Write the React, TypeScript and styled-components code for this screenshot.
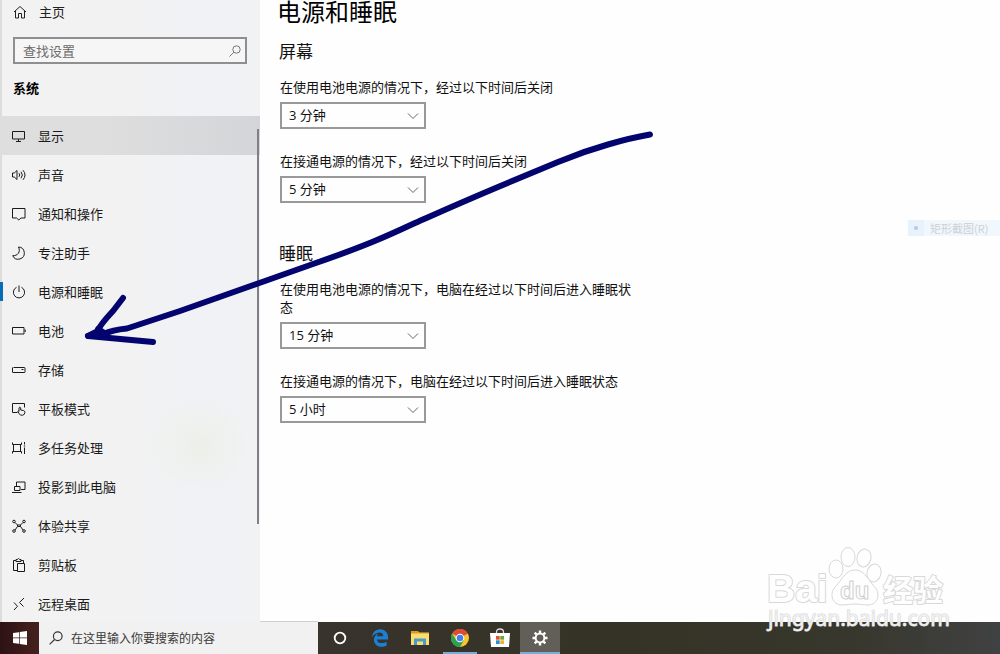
import React, { useId } from "react";
import styled, { createGlobalStyle, css } from "styled-components";
import { FaEdgeLegacy } from "react-icons/fa";

const GlobalStyle = createGlobalStyle`
  *, *::before, *::after { box-sizing: border-box; }
  body {
    margin: 0;
    background: #fefefe;
    color: #111;
    font: 13px/18px "Noto Sans CJK SC", "Microsoft YaHei", sans-serif;
  }
  h1, h2, p, ul { margin: 0; padding: 0; }
  button, input, select { font: inherit; color: inherit; }
`;

const Screen = styled.div`
  position: relative;
  display: flex;
  flex-direction: column;
  height: 100vh;
  overflow: hidden;
`;

const Window = styled.div`
  display: flex;
  flex: 1;
  min-height: 0;
`;

const Sidebar = styled.aside`
  position: relative;
  flex: none;
  width: 260px;
  overflow: hidden;
  background:
    linear-gradient(90deg, #dcdcdc 2px, transparent 2px),
    radial-gradient(circle at 200px 445px, #ecf0e8 0, rgba(236, 240, 232, 0) 50px),
    linear-gradient(90deg, rgba(242, 242, 242, 0) 50%, #f0f2f5 75%, #f1f2f4 100%),
    #f2f2f2;
`;

const HomeLink = styled.a`
  display: flex;
  align-items: center;
  gap: 12px;
  height: 23px;
  padding-left: 13px;
  color: #222;
  text-decoration: none;
`;

const SearchBox = styled.label`
  display: flex;
  align-items: center;
  height: 27px;
  margin: 14px 13px 0;
  padding: 0 4px 0 8px;
  border: 2px solid #8f8f8f;
  background: #f6f6f6;
  color: #777;
`;

const SearchInput = styled.input`
  flex: 1;
  min-width: 0;
  padding: 0;
  border: 0;
  outline: 0;
  background: none;
  &::placeholder { color: #6c6c6c; opacity: 1; }
`;

const Category = styled.h2`
  margin: 14px 13px 18px;
  color: #000;
  font-size: 13px;
  line-height: 20px;
`;

const NavList = styled.ul`
  list-style: none;
`;

const NavLink = styled.a<{ $hovered?: boolean; $current?: boolean }>`
  position: relative;
  display: flex;
  align-items: center;
  gap: 12px;
  height: 39px;
  padding-left: 12px;
  color: #1a1a1a;
  text-decoration: none;
  ${(p) => p.$hovered && css`background: linear-gradient(90deg, #dedede 40%, #d3d5d8);`}
  ${(p) =>
    p.$current &&
    css`
      &::before {
        content: "";
        position: absolute;
        left: 0;
        top: 10px;
        width: 3px;
        height: 19px;
        background: #0a6cb5;
      }
    `}
`;

const ScrollThumb = styled.div`
  position: absolute;
  top: 129px;
  right: 1px;
  width: 2px;
  height: 395px;
  background: #808184;
`;

const Glyph = styled.svg`
  flex: none;
  width: 14px;
  height: 14px;
  fill: none;
  stroke: currentColor;
  stroke-width: 1;
  overflow: visible;
`;

const Content = styled.main`
  flex: 1;
  min-width: 0;
  padding: 0 20px;
`;

const Title = styled.h1`
  margin-left: -3px;
  color: #000;
  font-size: 24px;
  font-weight: 400;
  line-height: 22px;
`;

const Section = styled.section`
  display: flex;
  flex-direction: column;
  gap: 23px;
  max-width: 355px;
  margin-top: 17px;
  & + & { margin-top: 38px; }
`;

const SectionTitle = styled.h2`
  margin: 0 0 -8px -1px;
  font-size: 17px;
  font-weight: 400;
  line-height: 24px;
`;

const Field = styled.div`
  display: flex;
  flex-direction: column;
  gap: 6px;
`;

const SelectWrap = styled.div`
  display: grid;
  align-items: center;
  width: 146px;
  & > * { grid-area: 1 / 1; }
`;

const Select = styled.select`
  width: 100%;
  height: 27px;
  padding: 0 24px 1px 7px;
  border: 2px solid #999;
  border-radius: 0;
  background: #fefefe;
  font-family: "Open Sans", "Noto Sans CJK SC", sans-serif;
  appearance: none;
`;

const Chevron = styled.svg`
  justify-self: end;
  width: 10px;
  height: 6px;
  margin-right: 8px;
  fill: none;
  stroke: #666;
  overflow: visible;
  pointer-events: none;
`;

const Taskbar = styled.footer`
  display: flex;
  flex: none;
  height: 32px;
  background: linear-gradient(90deg, #38332d 30%, #353325 62%, #38372d 85%, #404142);
`;

const StartButton = styled.button`
  display: grid;
  place-items: center;
  width: 39px;
  padding: 0;
  border: 0;
  background: linear-gradient(90deg, #2e1214, #44211e);
`;

const TaskSearch = styled.label`
  display: flex;
  align-items: center;
  gap: 8px;
  width: 279px;
  margin-top: -1px;
  padding: 0 10px;
  border-top: 1px solid #cfcfcf;
  background: #f1f1f1;
  color: #333;
  font-size: 12px;
`;

const TaskInput = styled(SearchInput)`
  &::placeholder { color: #3a3a3a; }
`;

const TaskApps = styled.div`
  display: flex;
  padding-left: 2px;
`;

const TaskButton = styled.button<{ $running?: boolean; $active?: boolean }>`
  position: relative;
  display: grid;
  place-items: center;
  width: 40px;
  padding: 0;
  border: 0;
  background: ${(p) => (p.$active ? "#625f59" : "transparent")};
  &::after {
    content: "";
    position: absolute;
    bottom: 0;
    left: ${(p) => (p.$active ? 0 : 3)}px;
    right: ${(p) => (p.$active ? 0 : 3)}px;
    height: 2px;
    background: ${(p) => (p.$running || p.$active ? "#77aed8" : "transparent")};
  }
`;

const SnipHint = styled.div`
  position: absolute;
  top: 220px;
  right: 0;
  display: flex;
  align-items: center;
  gap: 6px;
  width: 92px;
  height: 16px;
  background: #f0f7fd;
  color: #cdd1d6;
  font-size: 11px;
  line-height: 16px;
`;

const SnipMark = styled.span`
  display: grid;
  place-items: center;
  width: 16px;
  height: 16px;
  background: #e6f2fc;
  &::before {
    content: "";
    width: 4px;
    height: 4px;
    border-radius: 50%;
    background: #b9cbdc;
  }
`;

const Ink = styled.svg`
  position: absolute;
  top: 0;
  left: 0;
  width: 660px;
  height: 350px;
  fill: none;
  stroke: #04046f;
  stroke-width: 6;
  stroke-linecap: round;
  stroke-linejoin: round;
  pointer-events: none;
`;

const Watermark = styled.svg`
  position: absolute;
  right: 50px;
  bottom: 18px;
  width: 186px;
  height: 92px;
  overflow: visible;
  pointer-events: none;
`;

const icons: Record<string, React.ReactNode> = {
  home: <path d="M1 7 7 1.5 13 7M2.5 6v7H5.5V8.5h3V13h3V6" />,
  display: <path d="M.5 2.5h12v7.500H.5zM6.500 10v2M4 12.500h5" />,
  sound: <path d="M.5 5v4h1.800L5 11.500v-9L2.300 5zM7 5.200q1.500 1.800 0 3.600M9 3.700q2.700 3.300 0 6.600M11 2.200q4 4.800 0 9.600" />,
  message: <path d="M.5 1.500h12.500v9.500H9L6.800 13 4.600 11H.5z" />,
  moon: <path d="M6.500 1A6.100 6.100 0 1 1 .7 9.700C5.500 10 9 6 6.500 1z" />,
  power: <path d="M4.500 2.300a5.600 5.600 0 1 0 5 0M7 .5v6.500" />,
  battery: <path d="M.5 3.500H12v6.500H.5zM13.200 5.500v2.500" />,
  storage: <path d="M1.500 4.500h11q.5 0 .5.500v4q0 .5-.5.500H1q-.5 0-.5-.5V5q0-.5.500-.5M9.500 6.500h2" />,
  tablet: <path d="M5.500 10.500H.5v-9h12v4M7 9.500V5.800q.8-1.500 1.700 0V8l3 .6q1.300.4 1.200 1.700-.1 2.700-2.600 3-2.200 0-3.200-1.500L5.800 9.300q.5-.9 1.200.2" />,
  tasks: <path d="M1.500 3.500h7v7h-7zM.5 1.500v2h2M9.500 1.500v2h-2M.5 12.500v-2h2M9.500 12.500v-2h-2M12.500 1v2.500M12.500 6.500V13M11.800 5h1.400" />,
  project: <path d="M4.500 6.500V2H13v7.500H9M2.500 6.500H8v4H2.500zM0 12.500h9.500" />,
  share: (
    <>
      <path d="M3 3.500 5.500 6h3L11 3.500M3 11 5.500 7.500h3L11 11M5.500 6v1.500M8.500 6v1.500" />
      <circle cx="2" cy="2.500" r="1.300" />
      <circle cx="12" cy="2.500" r="1.300" />
      <circle cx="2" cy="12" r="1.300" />
      <circle cx="12" cy="12" r="1.300" />
    </>
  ),
  clipboard: <path d="M5 12.500H1.500v-10H4M9 2.500h2.500V5M4 1.500h1.200q1.300-2 2.600 0H9v2H4zM5.500 5.500h7v8h-7z" />,
  remote: <path d="M2 5.500 5.500 9.300 2 13M12 1 7.500 5.500 11.500 9.500" />,
};

const Icon = ({ name }: { name: string }) => (
  <Glyph viewBox="0 0 14 14" aria-hidden="true">{icons[name]}</Glyph>
);

const Magnifier = ({ size }: { size: number }) => (
  <svg width={size} height={size} viewBox="0 0 12 12" fill="none" stroke="currentColor" aria-hidden="true">
    <circle cx="7.500" cy="4.500" r="3.700" />
    <path d="M4.800 7.300.5 11.500" />
  </svg>
);

const navItems = [
  ["display", "显示"],
  ["sound", "声音"],
  ["message", "通知和操作"],
  ["moon", "专注助手"],
  ["power", "电源和睡眠"],
  ["battery", "电池"],
  ["storage", "存储"],
  ["tablet", "平板模式"],
  ["tasks", "多任务处理"],
  ["project", "投影到此电脑"],
  ["share", "体验共享"],
  ["clipboard", "剪贴板"],
  ["remote", "远程桌面"],
];

function TimeoutField({ label, value }: { label: string; value: string }) {
  const id = useId();
  return (
    <Field>
      <label htmlFor={id}>{label}</label>
      <SelectWrap>
        <Select id={id} defaultValue={value}>
          <option>{value}</option>
        </Select>
        <Chevron viewBox="0 0 10 6" aria-hidden="true">
          <path d="M0 .5 5 5.500 10 .5" />
        </Chevron>
      </SelectWrap>
    </Field>
  );
}

const WindowsLogo = () => (
  <svg width="14" height="14" viewBox="0 0 14 14" fill="#fff">
    <path d="M0 2 6 1.200V6.600H0zM6.700 1.100 14 0v6.600H6.700zM0 7.300h6v5.500L0 12zM6.700 7.300H14V14l-7.300-1.100z" />
  </svg>
);

const FolderIcon = () => (
  <svg width="18" height="16" viewBox="0 0 18 16">
    <path d="M0 1h7l1 1.500h10V15H0z" fill="#f3bd3c" />
    <path d="M0 4h18v11H0z" fill="#fbdc72" />
    <path d="M0 1h7v2H0z" fill="#d99a20" />
    <path d="M3 15V8.500h12V15h-3v-3.500H6V15z" fill="#4a9cc7" />
  </svg>
);

const ChromeIcon = () => (
  <svg width="18" height="18" viewBox="0 0 18 18">
    <circle cx="9" cy="9" r="9" fill="#f9c62e" />
    <path d="M9 9 1.200 4.500A9 9 0 0 1 16.800 4.500z" fill="#df4a3a" />
    <path d="M1.200 4.500A9 9 0 0 0 9 18l4-7L9 9 5 11z" fill="#2e9f55" />
    <path d="M9 4.800h8.100l-.3-.3H9z" fill="#df4a3a" />
    <circle cx="9" cy="9" r="4.300" fill="#fff" />
    <circle cx="9" cy="9" r="3.300" fill="#4382e8" />
  </svg>
);

const StoreIcon = () => (
  <svg width="20" height="20" viewBox="0 0 20 20">
    <path d="M6.500 6V4q0-3 3.500-3t3.500 3v2" fill="none" stroke="#ddd" strokeWidth="1.300" />
    <path d="M0 5h20l-1 14H1z" fill="#fff" />
    <path d="M6 8h3.700v3.700H6z" fill="#e5532d" />
    <path d="M10.300 8H14v3.700h-3.700z" fill="#6ca63b" />
    <path d="M6 12.300h3.700V16H6z" fill="#2b91c9" />
    <path d="M10.300 12.300H14V16h-3.700z" fill="#eeb32e" />
  </svg>
);

const GearIcon = () => (
  <svg width="16" height="16" viewBox="-8 -8 16 16" fill="none" stroke="#fff">
    <circle r="4.400" strokeWidth="2" />
    {[0, 45, 90, 135].map((angle) => (
      <path key={angle} d="M0-7.500V-5M0 5v2.500" strokeWidth="2.400" transform={`rotate(${angle})`} />
    ))}
  </svg>
);

const SiteMark = () => (
  <Watermark viewBox="0 0 186 92">
    <g
      fill="#fefefe"
      stroke="#d8d8d8"
      strokeWidth="1"
      strokeLinejoin="round"
      fontFamily='"Liberation Sans", "Noto Sans CJK SC", sans-serif'
      fontWeight="700"
    >
      <text x="3" y="58" fontSize="39" strokeWidth="2" paintOrder="stroke">Bai</text>
      <text x="119" y="57" fontSize="30" strokeWidth="2" paintOrder="stroke">经验</text>
      <ellipse cx="72" cy="25" rx="7" ry="9" />
      <ellipse cx="84" cy="13" rx="7" ry="9.500" />
      <ellipse cx="100" cy="14" rx="7" ry="9" transform="rotate(12 100 14)" />
      <ellipse cx="110" cy="29" rx="7" ry="9" transform="rotate(12 110 29)" />
      <path d="M91 26c9 0 12 8 18 15 9 8 5 20-5 20-5 0-8-1-13-1s-8 1-13 1c-10 0-14-12-5-20 6-7 9-15 18-15z" />
      <text x="76" y="55" fontSize="24" stroke="#cfcfcf">du</text>
    </g>
    <text
      x="4"
      y="82"
      fontFamily='"Noto Sans", sans-serif'
      fontSize="21"
      fill="#f0f0f0"
      stroke="#d4d4d4"
      strokeWidth="1"
      paintOrder="stroke"
    >
      jingyan.baidu.com
    </text>
  </Watermark>
);

export default function App() {
  return (
    <>
      <GlobalStyle />
      <Screen>
        <Window>
          <Sidebar>
            <HomeLink href="#home"><Icon name="home" />主页</HomeLink>
            <SearchBox>
              <SearchInput type="text" placeholder="查找设置" aria-label="查找设置" />
              <Magnifier size={12} />
            </SearchBox>
            <Category>系统</Category>
            <nav>
              <NavList>
                {navItems.map(([icon, text]) => (
                  <li key={icon}>
                    <NavLink href={`#${icon}`} $hovered={icon === "display"} $current={icon === "power"}>
                      <Icon name={icon} />
                      {text}
                    </NavLink>
                  </li>
                ))}
              </NavList>
            </nav>
            <ScrollThumb />
          </Sidebar>
          <Content>
            <Title>电源和睡眠</Title>
            <Section>
              <SectionTitle>屏幕</SectionTitle>
              <TimeoutField label="在使用电池电源的情况下，经过以下时间后关闭" value="3 分钟" />
              <TimeoutField label="在接通电源的情况下，经过以下时间后关闭" value="5 分钟" />
            </Section>
            <Section>
              <SectionTitle>睡眠</SectionTitle>
              <TimeoutField label="在使用电池电源的情况下，电脑在经过以下时间后进入睡眠状态" value="15 分钟" />
              <TimeoutField label="在接通电源的情况下，电脑在经过以下时间后进入睡眠状态" value="5 小时" />
            </Section>
          </Content>
        </Window>
        <Taskbar>
          <StartButton aria-label="开始"><WindowsLogo /></StartButton>
          <TaskSearch>
            <Magnifier size={14} />
            <TaskInput type="text" placeholder="在这里输入你要搜索的内容" aria-label="在这里输入你要搜索的内容" />
          </TaskSearch>
          <TaskApps>
            <TaskButton aria-label="Cortana">
              <svg width="14" height="14" viewBox="0 0 14 14"><circle cx="7" cy="7" r="5.300" fill="none" stroke="#fff" strokeWidth="1.800" /></svg>
            </TaskButton>
            <TaskButton aria-label="Edge"><FaEdgeLegacy size={18} color="#1b7fd6" /></TaskButton>
            <TaskButton aria-label="文件资源管理器"><FolderIcon /></TaskButton>
            <TaskButton aria-label="Chrome" $running><ChromeIcon /></TaskButton>
            <TaskButton aria-label="Store"><StoreIcon /></TaskButton>
            <TaskButton aria-label="设置" $active><GearIcon /></TaskButton>
          </TaskApps>
        </Taskbar>
        <SnipHint><SnipMark />矩形截图(R)</SnipHint>
        <Ink viewBox="0 0 660 350" aria-hidden="true">
          <path d="M650 134.500Q630 138 608 144.500C585 151 570 157 558 162L498 187C460 203 440 212 415 223C385 237 365 246 313 264L265 281L180 311L127 328.500Q112 330 104 334L88 336" />
          <path d="M123 298 113 311Q99 326 98 331L88 336 153 342" />
          <path d="M98 329 106 334" />
        </Ink>
        <SiteMark />
      </Screen>
    </>
  );
}
